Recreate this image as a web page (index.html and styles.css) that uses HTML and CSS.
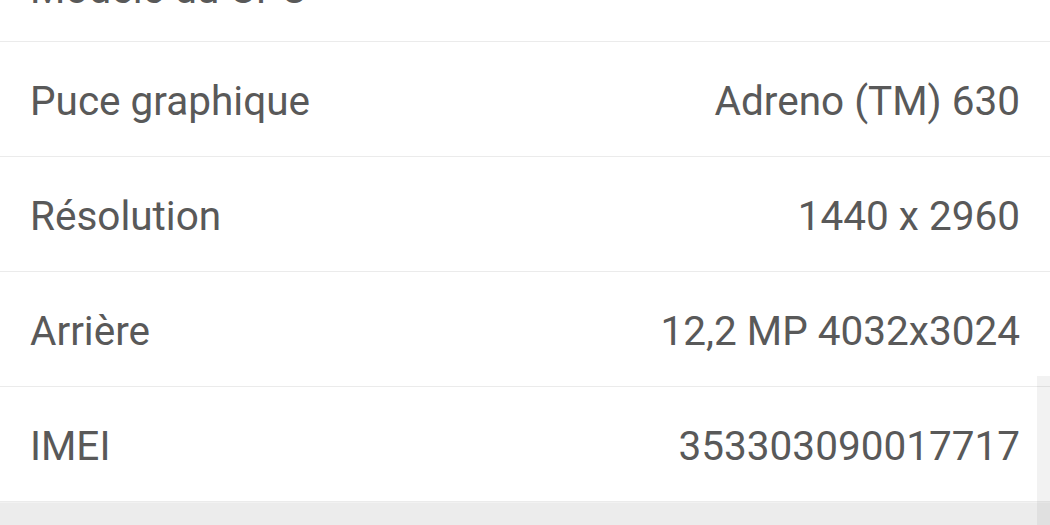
FILE: index.html
```html
<!DOCTYPE html>
<html lang="fr">
<head>
    <meta charset="UTF-8">
    <meta name="viewport" content="width=device-width, initial-scale=1.0">
    <title>Informations sur l'appareil</title>
    <link rel="stylesheet" href="styles.css">
</head>
<body>
    <div class="screen">
        <ul class="info-list">
            <li class="row row-first">
                <span class="label">Modèle du CPU</span>
                <span class="value"></span>
            </li>
            <li class="row">
                <span class="label">Puce graphique</span>
                <span class="value">Adreno (TM) 630</span>
            </li>
            <li class="row">
                <span class="label">Résolution</span>
                <span class="value">1440 x 2960</span>
            </li>
            <li class="row">
                <span class="label">Arrière</span>
                <span class="value">12,2 MP 4032x3024</span>
            </li>
            <li class="row">
                <span class="label">IMEI</span>
                <span class="value">353303090017717</span>
            </li>
        </ul>
        <div class="footer-band"></div>
        <div class="scrollbar"></div>
    </div>
</body>
</html>
```

FILE: styles.css
```css
html, body {
    margin: 0;
    padding: 0;
    height: 100%;
    overflow: hidden;
    background: #ffffff;
}
.screen {
    position: relative;
    height: 525px;
    overflow: hidden;
    display: flex;
    flex-direction: column;
    font-family: Roboto, "Noto Sans", sans-serif;
    color: #595959;
}
.info-list {
    list-style: none;
    margin: -73px 0 0 0;
    padding: 0;
}
.row {
    display: flex;
    justify-content: space-between;
    align-items: center;
    height: 111px;
    padding: 3px 30px 0 30px;
    border-bottom: 1px solid #ebebeb;
    font-size: 40.5px;
    box-sizing: content-box;
}
.row-first {
    height: 104px;
    padding-top: 10px;
}
.value {
    text-align: right;
}
.footer-band {
    flex: 1;
    background: #ececec;
    border-top: 1px solid #f2f2f2;
}
.scrollbar {
    position: absolute;
    right: 0;
    top: 376px;
    bottom: 0;
    width: 13px;
    background: rgba(0, 0, 0, 0.05);
}
```
